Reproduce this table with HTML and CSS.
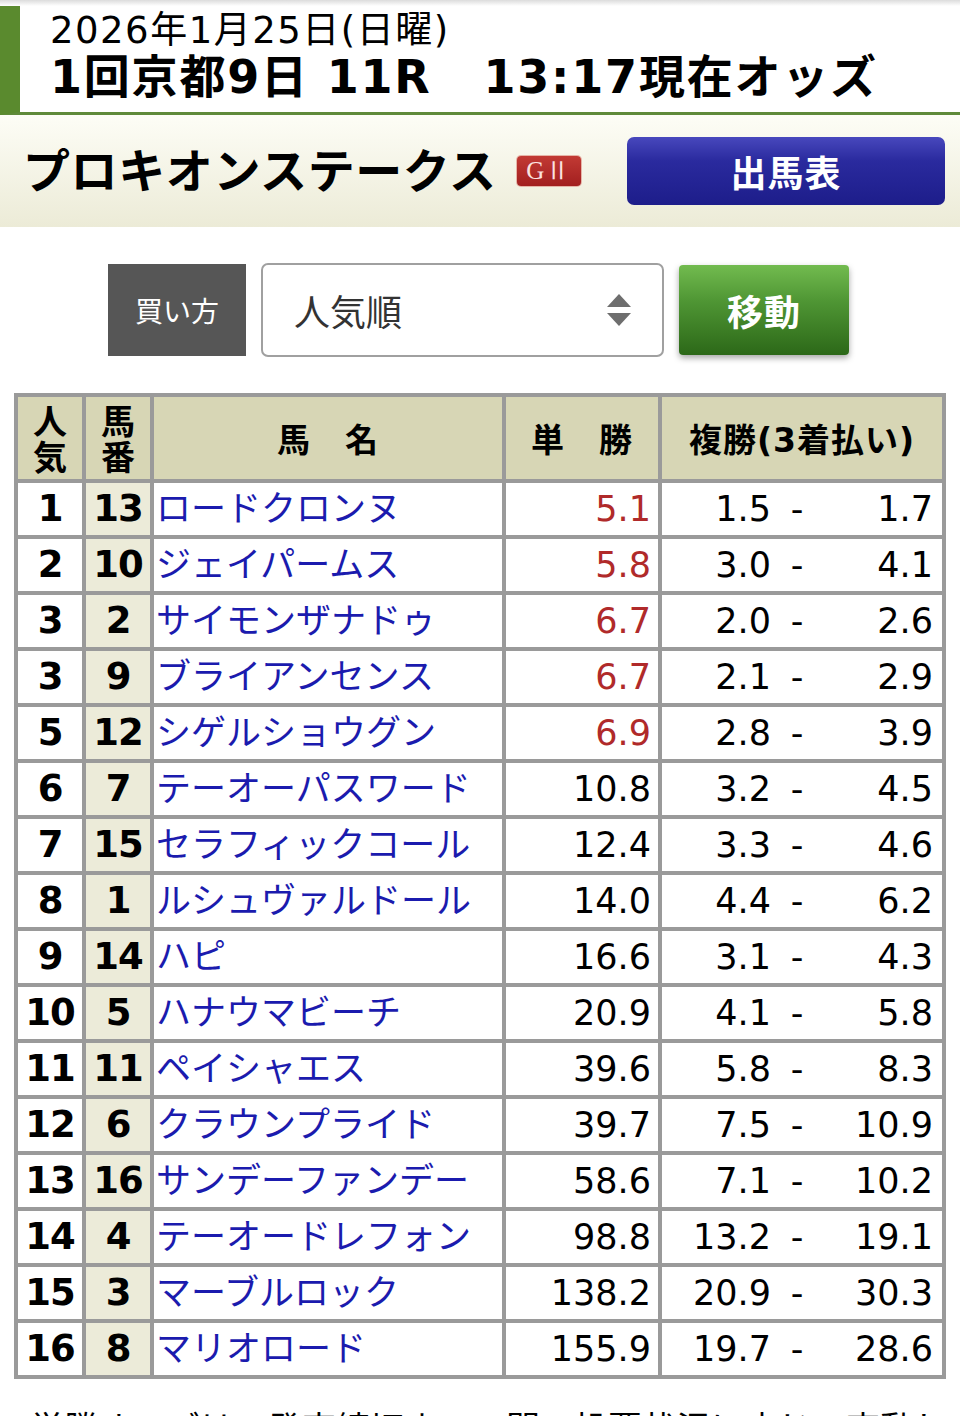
FILE: index.html
```html
<!DOCTYPE html>
<html lang="ja">
<head>
<meta charset="utf-8">
<title>オッズ</title>
<link rel="stylesheet" href="styles.css">
</head>
<body>
<div class="topshade"></div>
<header class="race-head">
  <div class="date">2026年1月25日(日曜)</div>
  <div class="race">1回京都9日 11R<span class="time">13:17現在オッズ</span></div>
</header>
<section class="band">
  <h1 class="title">プロキオンステークス</h1>
  <span class="grade">GⅡ</span>
  <a class="btn-blue">出馬表</a>
</section>
<div class="controls">
  <div class="label">買い方</div>
  <div class="select"><span>人気順</span>
    <svg class="arrows" width="26" height="36" viewBox="0 0 26 36"><path d="M13 2 L25 15 L1 15 Z" fill="#6e6e6e"/><path d="M1 21 L25 21 L13 34 Z" fill="#6e6e6e"/></svg>
  </div>
  <a class="btn-green">移動</a>
</div>
<table class="odds">
  <colgroup><col class="c1"><col class="c2"><col class="c3"><col class="c4"><col class="c5"></colgroup>
  <thead>
    <tr><th class="stack">人<br>気</th><th class="stack">馬<br>番</th><th>馬　名</th><th>単　勝</th><th>複勝(3着払い)</th></tr>
  </thead>
  <tbody>
    <tr><td class="rk">1</td><td class="no">13</td><td class="nm">ロードクロンヌ</td><td class="win hot">5.1</td><td class="plc"><span class="lo">1.5</span><span class="ds">-</span><span class="hi">1.7</span></td></tr>
    <tr><td class="rk">2</td><td class="no">10</td><td class="nm">ジェイパームス</td><td class="win hot">5.8</td><td class="plc"><span class="lo">3.0</span><span class="ds">-</span><span class="hi">4.1</span></td></tr>
    <tr><td class="rk">3</td><td class="no">2</td><td class="nm">サイモンザナドゥ</td><td class="win hot">6.7</td><td class="plc"><span class="lo">2.0</span><span class="ds">-</span><span class="hi">2.6</span></td></tr>
    <tr><td class="rk">3</td><td class="no">9</td><td class="nm">ブライアンセンス</td><td class="win hot">6.7</td><td class="plc"><span class="lo">2.1</span><span class="ds">-</span><span class="hi">2.9</span></td></tr>
    <tr><td class="rk">5</td><td class="no">12</td><td class="nm">シゲルショウグン</td><td class="win hot">6.9</td><td class="plc"><span class="lo">2.8</span><span class="ds">-</span><span class="hi">3.9</span></td></tr>
    <tr><td class="rk">6</td><td class="no">7</td><td class="nm">テーオーパスワード</td><td class="win">10.8</td><td class="plc"><span class="lo">3.2</span><span class="ds">-</span><span class="hi">4.5</span></td></tr>
    <tr><td class="rk">7</td><td class="no">15</td><td class="nm">セラフィックコール</td><td class="win">12.4</td><td class="plc"><span class="lo">3.3</span><span class="ds">-</span><span class="hi">4.6</span></td></tr>
    <tr><td class="rk">8</td><td class="no">1</td><td class="nm">ルシュヴァルドール</td><td class="win">14.0</td><td class="plc"><span class="lo">4.4</span><span class="ds">-</span><span class="hi">6.2</span></td></tr>
    <tr><td class="rk">9</td><td class="no">14</td><td class="nm">ハピ</td><td class="win">16.6</td><td class="plc"><span class="lo">3.1</span><span class="ds">-</span><span class="hi">4.3</span></td></tr>
    <tr><td class="rk">10</td><td class="no">5</td><td class="nm">ハナウマビーチ</td><td class="win">20.9</td><td class="plc"><span class="lo">4.1</span><span class="ds">-</span><span class="hi">5.8</span></td></tr>
    <tr><td class="rk">11</td><td class="no">11</td><td class="nm">ペイシャエス</td><td class="win">39.6</td><td class="plc"><span class="lo">5.8</span><span class="ds">-</span><span class="hi">8.3</span></td></tr>
    <tr><td class="rk">12</td><td class="no">6</td><td class="nm">クラウンプライド</td><td class="win">39.7</td><td class="plc"><span class="lo">7.5</span><span class="ds">-</span><span class="hi">10.9</span></td></tr>
    <tr><td class="rk">13</td><td class="no">16</td><td class="nm">サンデーファンデー</td><td class="win">58.6</td><td class="plc"><span class="lo">7.1</span><span class="ds">-</span><span class="hi">10.2</span></td></tr>
    <tr><td class="rk">14</td><td class="no">4</td><td class="nm">テーオードレフォン</td><td class="win">98.8</td><td class="plc"><span class="lo">13.2</span><span class="ds">-</span><span class="hi">19.1</span></td></tr>
    <tr><td class="rk">15</td><td class="no">3</td><td class="nm">マーブルロック</td><td class="win">138.2</td><td class="plc"><span class="lo">20.9</span><span class="ds">-</span><span class="hi">30.3</span></td></tr>
    <tr><td class="rk">16</td><td class="no">8</td><td class="nm">マリオロード</td><td class="win">155.9</td><td class="plc"><span class="lo">19.7</span><span class="ds">-</span><span class="hi">28.6</span></td></tr>
  </tbody>
</table>
<p class="note">単勝オッズは、発売締切までの間、投票状況に応じて変動します。</p>
</body>
</html>
```
FILE: styles.css
```css
* { box-sizing: border-box; }
html, body { margin: 0; padding: 0; background: #fff; }
body {
  font-family: "DejaVu Sans", "Noto Sans CJK JP", sans-serif;
  color: #000;
  width: 960px;
  overflow: hidden;
}
.topshade {
  height: 6px;
  background: linear-gradient(#dcdcdc, #ffffff);
}
.race-head {
  border-left: 20px solid #5a8a2e;
  border-bottom: 3px solid #5f8a3a;
  padding: 5px 0 0 30px;
  height: 109px;
}
.date {
  font-size: 37px;
  line-height: 40px;
  letter-spacing: 1.5px;
}
.race {
  font-size: 46px;
  font-weight: 700;
  line-height: 52px;
  letter-spacing: 1.8px;
}
.race .time { margin-left: 52px; }

.band {
  height: 112px;
  background: linear-gradient(#fdfdf6, #ecebd7);
  display: flex;
  align-items: center;
  padding: 0 15px 0 23px;
}
.title {
  margin: 0;
  font-size: 47px;
  font-weight: 700;
  letter-spacing: 0.6px;
  line-height: 1;
}
.grade {
  margin-left: 20px;
  width: 64px;
  height: 30px;
  border-radius: 4px;
  background: linear-gradient(#c23a34, #a21f1f);
  box-shadow: 0 0 0 1px #e6b5a8;
  color: #fbe3e0;
  font-family: "Liberation Serif", serif;
  font-size: 25px;
  line-height: 30px;
  text-align: center;
  letter-spacing: 1px;
}
.btn-blue {
  margin-left: auto;
  width: 318px;
  height: 68px;
  border-radius: 7px;
  background: linear-gradient(#4848bd 0%, #2a2a9e 35%, #1d1d8a 100%);
  color: #fff;
  font-family: "Noto Sans CJK JP", sans-serif;
  font-size: 36px;
  font-weight: 700;
  display: flex;
  align-items: center;
  justify-content: center;
  letter-spacing: 1px;
}

.controls {
  display: flex;
  justify-content: center;
  align-items: center;
  gap: 15px;
  padding: 36px 3px 36px 0;
}
.label {
  width: 138px;
  height: 92px;
  background: #565656;
  color: #fff;
  font-family: "Noto Sans CJK JP", sans-serif;
  font-size: 28px;
  display: flex;
  align-items: center;
  justify-content: center;
}
.select {
  width: 403px;
  height: 94px;
  border: 2px solid #a0a0a0;
  border-radius: 7px;
  display: flex;
  align-items: center;
  padding: 0 30px 0 31px;
  font-family: "Noto Sans CJK JP", sans-serif;
  font-size: 36px;
  color: #333;
}
.select span { flex: 1; }
.btn-green {
  width: 170px;
  height: 90px;
  border-radius: 4px;
  background: linear-gradient(#72bb4f 0%, #4f9634 40%, #2c6818 100%);
  box-shadow: 0 3px 6px rgba(0,0,0,0.35);
  color: #fff;
  font-family: "Noto Sans CJK JP", sans-serif;
  font-size: 36px;
  font-weight: 700;
  display: flex;
  align-items: center;
  justify-content: center;
  letter-spacing: 1px;
}

.odds {
  margin-left: 14px;
  width: 928px;
  table-layout: fixed;
  border-collapse: collapse;
  border: 4px solid #9a9a9a;
}
.c1 { width: 68px; }
.c2 { width: 68px; }
.c3 { width: 352px; }
.c4 { width: 156px; }
.c5 { width: 284px; }
.odds th, .odds td {
  border: 4px solid #9a9a9a;
  padding: 0;
}
.odds th {
  background: #d7d6b5;
  height: 86px;
  font-size: 33px;
  font-weight: 700;
  text-align: center;
  letter-spacing: 1px;
}
.odds th.stack {
  line-height: 36px;
  font-size: 34px;
  letter-spacing: 0;
  font-family: "Noto Sans CJK JP", sans-serif;
}
.odds td {
  height: 56px;
  font-size: 35px;
  line-height: 48px;
  white-space: nowrap;
}
.rk, .no {
  text-align: center;
  font-weight: 700;
  font-size: 37px !important;
  letter-spacing: -1px;
}
.no { background: #ecebd9; }
.nm {
  color: #1b1bae;
  padding-left: 2px !important;
  letter-spacing: 0;
}
.win {
  text-align: right;
  padding-right: 7px !important;
}
.win.hot { color: #b02a2a; }
.plc span { display: inline-block; }
.lo { width: 109px; text-align: right; }
.ds { width: 52px; text-align: center; }
.hi { width: 110px; text-align: right; }

.note {
  margin: 23px 0 0 30px;
  font-family: "Noto Sans CJK JP", sans-serif;
  font-size: 34px;
  white-space: nowrap;
}
```
